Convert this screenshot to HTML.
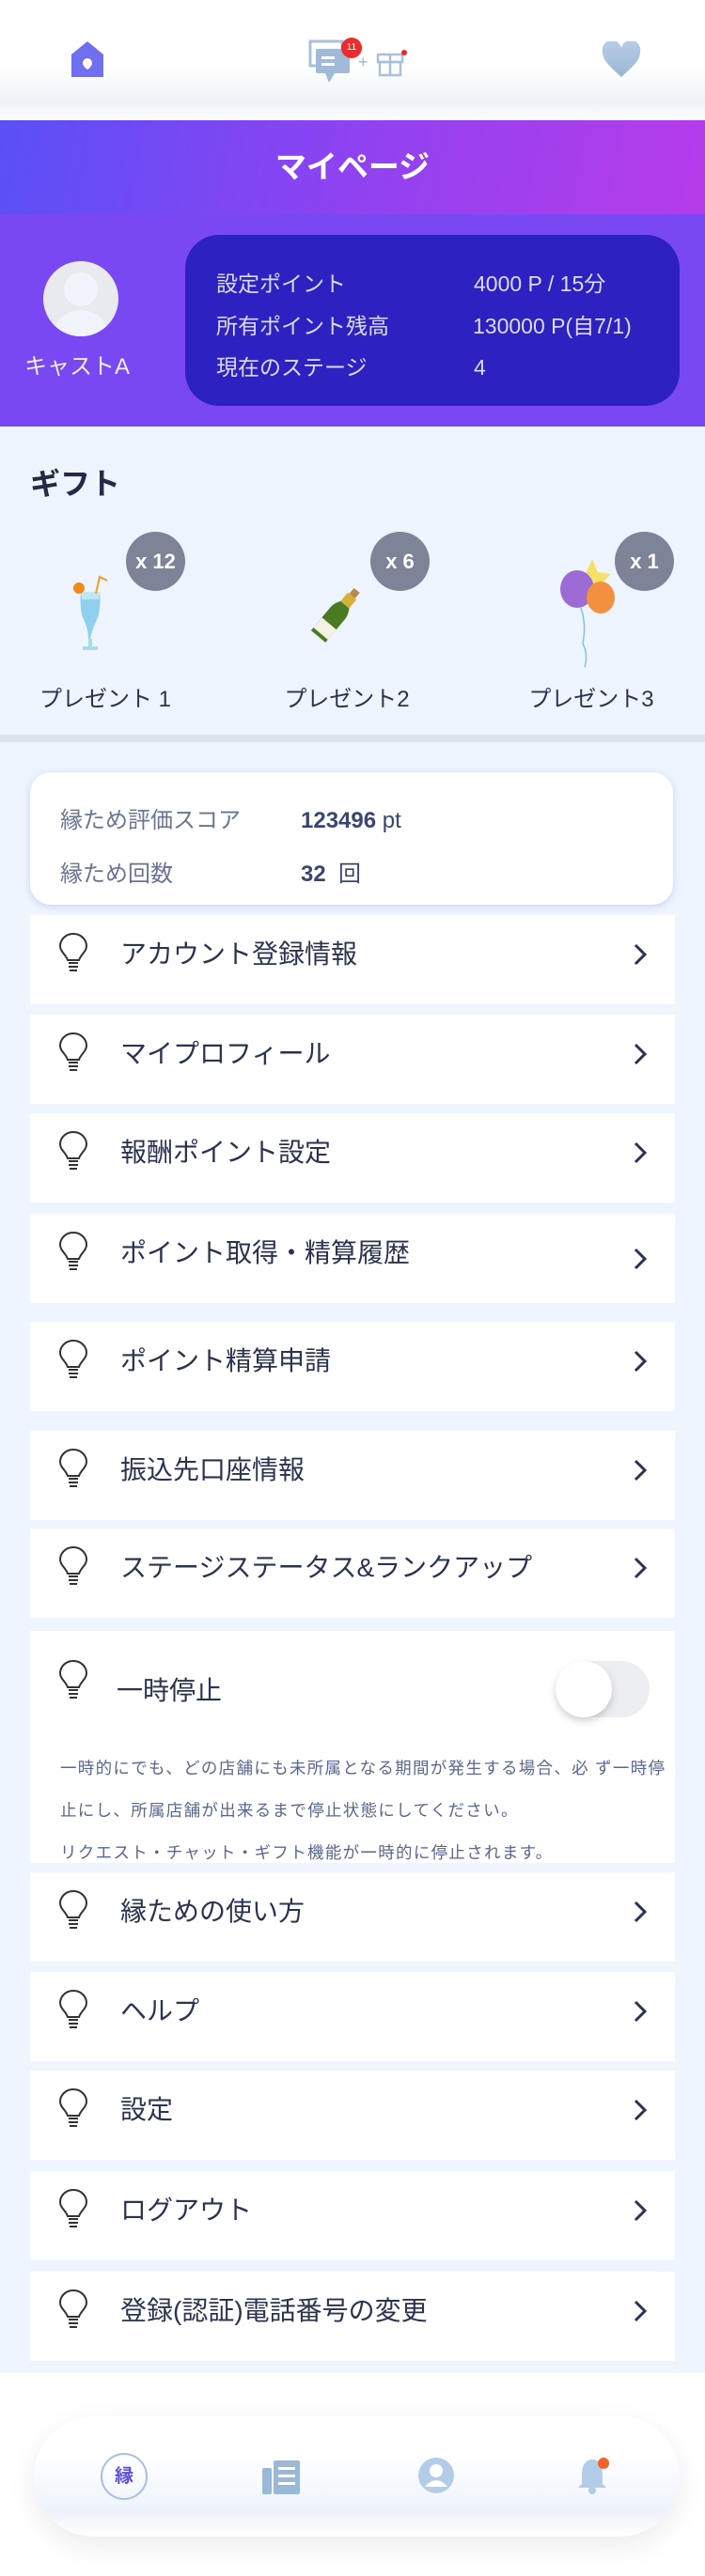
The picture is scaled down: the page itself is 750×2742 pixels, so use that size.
<!DOCTYPE html>
<html><head><meta charset="utf-8"><style>
*{margin:0;padding:0;box-sizing:border-box}
body{width:750px;height:2742px;background:#fff;font-family:"Liberation Sans","Noto Sans CJK JP",sans-serif;position:relative;overflow:hidden;color:#2a3350}
.abs{position:absolute}
.hdr{left:0;top:0;width:750px;height:128px;background:linear-gradient(#fff 0%,#fff 55%,#eef2f8 85%,#fdfdff 100%)}
.title{left:0;top:128px;width:750px;height:100px;background:linear-gradient(100deg,#5a50f6,#8f42f1 50%,#b63ce9);color:#fff;font-size:33px;font-weight:bold;text-align:center;line-height:100px}
.prof{left:0;top:228px;width:750px;height:226px;background:#7948f2}
.card{left:197px;top:250px;width:526px;height:182px;background:#2d21c1;border-radius:36px;color:#dcdcf5;font-size:23px}
.card div{position:absolute;line-height:30px}
.gift{left:0;top:454px;width:750px;height:2072px;background:#eef5fe}
.badge{width:63px;height:63px;border-radius:50%;background:#7d8498;color:#fff;font-size:22px;font-weight:bold;text-align:center;line-height:63px}
.glabel{font-size:24px;color:#2a3350;width:200px;text-align:center}
.score{left:32px;top:822px;width:684px;height:141px;background:#fff;border-radius:22px;box-shadow:0 2px 8px rgba(120,130,230,.3);font-size:24px;color:#6a7594}
.score div{line-height:34px}
.item{left:32px;width:686px;height:95px;background:#fff}
.item .t{position:absolute;left:96px;top:20px;font-size:28px;color:#2a3350}
.item svg.b{position:absolute;left:30px;top:18px}
.item .c{position:absolute;left:640px;top:28px}
.nav{left:36px;top:2572px;width:687px;height:128px;border-radius:64px;background:linear-gradient(#fff 30%,#eef3fb 80%,#fff);box-shadow:0 10px 30px rgba(0,0,0,.08)}
</style></head><body>
<div class="abs hdr"></div>
<svg class="abs" style="left:74px;top:42px" width="38" height="42" viewBox="0 0 38 42"><path d="M19 2 L36 16 V40 H2 V16 Z" fill="#6f6ff0"/><path d="M19 20 a5 5 0 0 1 5 5 c0 4-5 7-5 7 s-5-3-5-7 a5 5 0 0 1 5-5z" fill="#fff"/></svg>
<svg class="abs" style="left:328px;top:40px" width="50" height="50" viewBox="0 0 50 50"><rect x="2" y="4" width="34" height="26" fill="none" stroke="#a8c0da" stroke-width="3"/><rect x="8" y="12" width="36" height="26" rx="2" fill="#a0bad8"/><path d="M18 38 L22 48 L28 38Z" fill="#a0bad8"/><rect x="14" y="20" width="14" height="3" fill="#fff"/><rect x="14" y="27" width="14" height="3" fill="#fff"/></svg>
<div class="abs" style="left:363px;top:40px;width:22px;height:22px;border-radius:50%;background:#f02a2a;color:#fff;font-size:10px;text-align:center;line-height:22px">11</div>
<div class="abs" style="left:381px;top:56px;color:#a0b5cc;font-size:18px">+</div>
<svg class="abs" style="left:400px;top:50px" width="34" height="32" viewBox="0 0 34 32"><rect x="2" y="8" width="26" height="8" fill="none" stroke="#a8c0da" stroke-width="2.5"/><rect x="4" y="16" width="22" height="14" fill="none" stroke="#a8c0da" stroke-width="2.5"/><line x1="15" y1="8" x2="15" y2="30" stroke="#a8c0da" stroke-width="2.5"/><circle cx="30" cy="6" r="3" fill="#f02a2a"/></svg>
<svg class="abs" style="left:640px;top:44px" width="42" height="40" viewBox="0 0 42 40"><defs><linearGradient id="hg" x1="0" y1="0" x2="0" y2="1"><stop offset="0" stop-color="#b8cde6"/><stop offset="1" stop-color="#9ab6d6"/></linearGradient></defs><path d="M21 38 C8 26 1 20 1 11 A10 10 0 0 1 21 7 A10 10 0 0 1 41 11 C41 20 34 26 21 38Z" fill="url(#hg)"/></svg>

<div class="abs title">マイページ</div>
<div class="abs prof"></div>
<div class="abs" style="left:46px;top:278px;width:80px;height:80px;border-radius:50%;background:#e8eaf0;overflow:hidden"><div class="abs" style="left:22px;top:12px;width:36px;height:36px;border-radius:50%;background:#f1f4fa"></div><div class="abs" style="left:10px;top:52px;width:60px;height:40px;border-radius:30px 30px 0 0;background:#f1f4fa"></div></div>
<div class="abs" style="left:26px;top:370px;color:#eee;font-size:24px">キャストA</div>
<div class="abs card">
<div style="left:33px;top:37px">設定ポイント</div><div style="left:307px;top:37px">4000 P / 15分</div>
<div style="left:33px;top:82px">所有ポイント残高</div><div style="left:306px;top:82px">130000 P(自7/1)</div>
<div style="left:33px;top:126px">現在のステージ</div><div style="left:307px;top:126px">4</div>
</div>

<div class="abs gift"></div>
<div class="abs" style="left:32px;top:490px;font-size:32px;font-weight:bold;color:#232b45">ギフト</div>
<svg class="abs" style="left:72px;top:610px" width="60" height="90" viewBox="0 0 60 90"><path d="M14 20 Q12 40 18 52 Q22 60 22 70 L24 70 Q26 60 30 52 Q36 40 34 20Z" fill="#8fd0ee"/><path d="M14 20 H34 L33 28 H15Z" fill="#c3e6f3"/><rect x="22" y="70" width="4" height="8" fill="#a7dcea"/><rect x="16" y="78" width="16" height="4" fill="#a7dcea"/><circle cx="12" cy="16" r="6" fill="#f08a1e"/><path d="M30 22 L34 4 L42 8" fill="none" stroke="#f0a020" stroke-width="2"/></svg>
<svg class="abs" style="left:330px;top:620px" width="60" height="70" viewBox="0 0 60 70"><g transform="rotate(40 30 35)"><rect x="24" y="2" width="8" height="8" fill="#b98a4a"/><rect x="22" y="10" width="12" height="12" fill="#d7b23a"/><path d="M22 22 Q18 28 18 34 V66 H38 V34 Q38 28 34 22Z" fill="#4c7a22"/><rect x="18" y="48" width="20" height="14" fill="#f4f2e4"/></g></svg>
<svg class="abs" style="left:590px;top:585px" width="80" height="130" viewBox="0 0 80 130"><path d="M40 10 L46 24 L60 26 L50 36 L52 50 L40 43 L28 50 L30 36 L20 26 L34 24Z" fill="#f6e06a"/><ellipse cx="24" cy="42" rx="18" ry="20" fill="#9c6bd6"/><ellipse cx="49" cy="51" rx="15" ry="17" fill="#f39040"/><path d="M28 62 Q34 80 30 100 Q36 112 32 125" fill="none" stroke="#7ac6e6" stroke-width="1.5"/></svg>
<div class="abs badge" style="left:134px;top:566px">x 12</div>
<div class="abs badge" style="left:394px;top:566px">x 6</div>
<div class="abs badge" style="left:654px;top:566px">x 1</div>
<div class="abs glabel" style="left:12px;top:724px">プレゼント 1</div>
<div class="abs glabel" style="left:269px;top:724px">プレゼント2</div>
<div class="abs glabel" style="left:529px;top:724px">プレゼント3</div>
<div class="abs" style="left:0;top:782px;width:750px;height:8px;background:#dde3ea"></div>

<div class="abs score">
<div class="abs" style="left:32px;top:35px">縁ため評価スコア</div><div class="abs" style="left:288px;top:35px;color:#3a4670"><b>123496</b> pt</div>
<div class="abs" style="left:32px;top:92px">縁ため回数</div><div class="abs" style="left:288px;top:92px;color:#3a4670"><b>32</b>&nbsp; 回</div>
</div>

<svg width="0" height="0" style="position:absolute"><defs>
<g id="bulb"><path d="M16 2 C7 2 2 9 2 15 C2 21 8 24 10 30 H22 C24 24 30 21 30 15 C30 9 25 2 16 2Z" fill="none" stroke="#333" stroke-width="2"/><path d="M11 33 H21 M11 37 H21 M12 41 H20" stroke="#333" stroke-width="2"/></g>
<g id="chev"><path d="M4 4 L14 14 L4 24" fill="none" stroke="#2a3350" stroke-width="3"/></g>
</defs></svg>

<div class="abs item" style="top:974px"><svg class="b" width="34" height="46"><use href="#bulb"/></svg><div class="t">アカウント登録情報</div><svg class="c" width="20" height="30"><use href="#chev"/></svg></div>
<div class="abs item" style="top:1080px"><svg class="b" width="34" height="46"><use href="#bulb"/></svg><div class="t">マイプロフィール</div><svg class="c" width="20" height="30"><use href="#chev"/></svg></div>
<div class="abs item" style="top:1185px"><svg class="b" width="34" height="46"><use href="#bulb"/></svg><div class="t">報酬ポイント設定</div><svg class="c" width="20" height="30"><use href="#chev"/></svg></div>
<div class="abs item" style="top:1292px"><svg class="b" width="34" height="46"><use href="#bulb"/></svg><div class="t">ポイント取得・精算履歴</div><svg class="c" width="20" height="30" style="top:34px"><use href="#chev"/></svg></div>
<div class="abs item" style="top:1407px"><svg class="b" width="34" height="46"><use href="#bulb"/></svg><div class="t">ポイント精算申請</div><svg class="c" width="20" height="30"><use href="#chev"/></svg></div>
<div class="abs item" style="top:1523px"><svg class="b" width="34" height="46"><use href="#bulb"/></svg><div class="t">振込先口座情報</div><svg class="c" width="20" height="30"><use href="#chev"/></svg></div>
<div class="abs item" style="top:1627px"><svg class="b" width="34" height="46"><use href="#bulb"/></svg><div class="t">ステージステータス&amp;ランクアップ</div><svg class="c" width="20" height="30"><use href="#chev"/></svg></div>
<div class="abs item" style="top:1736px;height:247px"><svg class="b" width="34" height="46" style="top:30px"><use href="#bulb"/></svg><div class="t" style="left:92px;top:42px">一時停止</div>
<div class="abs" style="left:559px;top:32px;width:100px;height:60px;border-radius:30px;background:#eceef2"></div>
<div class="abs" style="left:559px;top:32px;width:60px;height:60px;border-radius:50%;background:#fff;box-shadow:0 4px 8px rgba(0,0,0,.18)"></div>
<div class="abs" style="left:32px;top:124px;font-size:17.5px;color:#5a6790;line-height:45px;width:700px;letter-spacing:1.3px;white-space:nowrap">一時的にでも、どの店舗にも未所属となる期間が発生する場合、必 ず一時停<br>止にし、所属店舗が出来るまで停止状態にしてください。<br>リクエスト・チャット・ギフト機能が一時的に停止されます。</div></div>
<div class="abs item" style="top:1993px"><svg class="b" width="34" height="46"><use href="#bulb"/></svg><div class="t">縁ための使い方</div><svg class="c" width="20" height="30"><use href="#chev"/></svg></div>
<div class="abs item" style="top:2099px"><svg class="b" width="34" height="46"><use href="#bulb"/></svg><div class="t">ヘルプ</div><svg class="c" width="20" height="30"><use href="#chev"/></svg></div>
<div class="abs item" style="top:2204px"><svg class="b" width="34" height="46"><use href="#bulb"/></svg><div class="t">設定</div><svg class="c" width="20" height="30"><use href="#chev"/></svg></div>
<div class="abs item" style="top:2311px"><svg class="b" width="34" height="46"><use href="#bulb"/></svg><div class="t">ログアウト</div><svg class="c" width="20" height="30"><use href="#chev"/></svg></div>
<div class="abs item" style="top:2418px"><svg class="b" width="34" height="46"><use href="#bulb"/></svg><div class="t">登録(認証)電話番号の変更</div><svg class="c" width="20" height="30"><use href="#chev"/></svg></div>

<div class="abs nav"></div>
<div class="abs" style="left:107px;top:2611px;width:50px;height:50px;border-radius:50%;border:2px solid #a8c0e0;color:#5a4fe0;font-size:20px;font-weight:bold;text-align:center;line-height:46px">縁</div>
<svg class="abs" style="left:279px;top:2617px" width="42" height="40" viewBox="0 0 42 40"><rect x="0" y="10" width="10" height="28" rx="2" fill="#9ab8d8"/><rect x="12" y="2" width="28" height="36" rx="2" fill="#9ab8d8"/><rect x="17" y="9" width="18" height="3" fill="#fff"/><rect x="17" y="17" width="18" height="3" fill="#fff"/><rect x="17" y="25" width="18" height="3" fill="#fff"/></svg>
<svg class="abs" style="left:444px;top:2615px" width="40" height="40" viewBox="0 0 40 40"><circle cx="20" cy="20" r="19" fill="#b3cde8"/><circle cx="20" cy="15" r="7" fill="#fff"/><path d="M8 32 Q20 18 32 32" fill="#fff"/></svg>
<svg class="abs" style="left:612px;top:2614px" width="40" height="42" viewBox="0 0 40 42"><path d="M18 4 C10 4 7 12 7 20 V30 L3 34 H33 L29 30 V20 C29 12 26 4 18 4Z" fill="#b3cde8"/><circle cx="18" cy="37" r="4" fill="#b3cde8"/><circle cx="30" cy="8" r="6" fill="#f5622a"/></svg>
</body></html>
